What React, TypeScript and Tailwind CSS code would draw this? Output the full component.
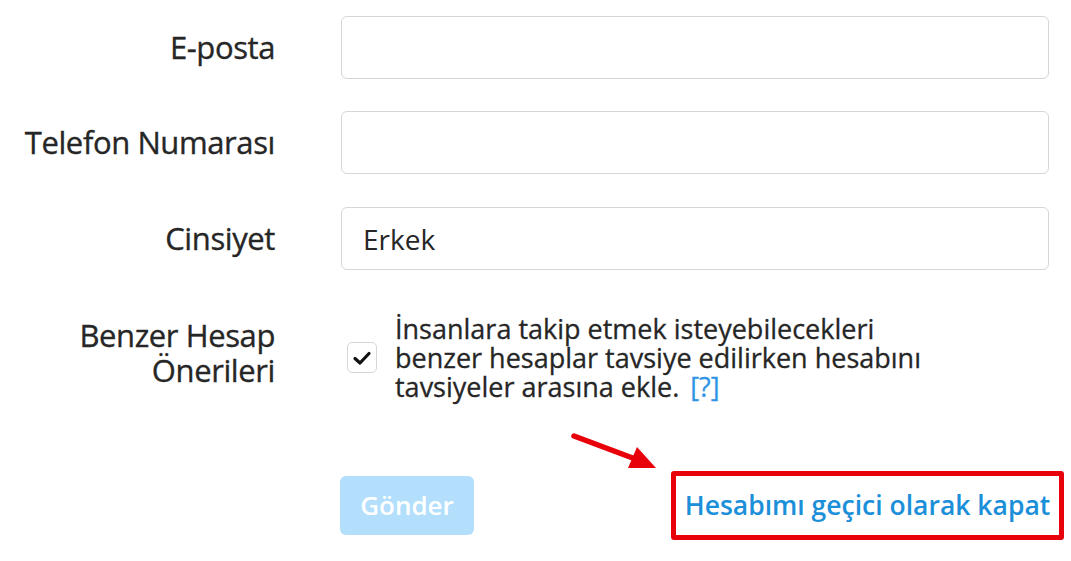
import React from "react";

const font = { fontFamily: '"Open Sans", "Noto Sans", sans-serif' };

function Label({ children }: { children: React.ReactNode }) {
  return (
    <div className="w-[275px] shrink-0 text-right text-[31px] font-normal leading-[35px] tracking-[-0.4px] text-[#262626] [-webkit-text-stroke:0.35px_#262626]">
      {children}
    </div>
  );
}

function Input({ value }: { value?: string }) {
  return (
    <div className="ml-[66px] flex h-[63px] w-[708px] items-center rounded-[6px] border border-[#d6d6d6] bg-white pl-[21px] text-[28px] text-[#262626]">
      {value}
    </div>
  );
}

export default function App() {
  return (
    <div
      className="relative h-[561px] w-[1071px] overflow-hidden bg-white pl-0 pt-[16px]"
      style={font}
    >
      <div className="flex items-center">
        <Label>E-posta</Label>
        <Input />
      </div>
      <div className="mt-[32px] flex items-center">
        <Label>Telefon Numarası</Label>
        <Input />
      </div>
      <div className="mt-[33px] flex items-center">
        <Label>Cinsiyet</Label>
        <Input value="Erkek" />
      </div>
      <div className="mt-[44px] flex items-start">
        <div className="pt-[4px]">
          <Label>
            Benzer Hesap
            <br />
            Önerileri
          </Label>
        </div>
        <div className="ml-[72px] flex items-center">
          <div className="flex h-[31px] w-[30px] shrink-0 items-center justify-center rounded-[5px] border border-[#d6d6d6] bg-white">
            <svg width="20" height="16" viewBox="0 0 20 16">
              <path
                d="M3 8.5 L8 13 L17 3.5"
                fill="none"
                stroke="#111"
                strokeWidth="3.2"
                strokeLinecap="round"
                strokeLinejoin="round"
              />
            </svg>
          </div>
          <div className="ml-[18px] text-[27px] font-normal leading-[29px] text-[#262626] [-webkit-text-stroke:0.3px_#262626]">
            İnsanlara takip etmek isteyebilecekleri
            <br />
            benzer hesaplar tavsiye edilirken hesabını
            <br />
            tavsiyeler arasına ekle.{" "}
            <span className="ml-[4px] font-normal text-[#2f95e4] [-webkit-text-stroke:0.3px_#2f95e4]">
              [?]
            </span>
          </div>
        </div>
      </div>
      <div className="mt-[70px] flex items-center">
        <div className="ml-[340px] flex h-[59px] w-[134px] items-center justify-center rounded-[6px] bg-[#b3dffc] text-[26px] font-semibold text-white">
          Gönder
        </div>
        <div className="ml-[197px] flex h-[69px] w-[393px] items-center justify-center rounded-[3px] border-[5px] border-[#e8000b]">
          <span className="text-[26.5px] font-semibold text-[#1c8fd9]">
            Hesabımı geçici olarak kapat
          </span>
        </div>
      </div>
      <svg
        className="absolute left-0 top-0"
        width="1071"
        height="561"
        viewBox="0 0 1071 561"
      >
        <line
          x1="574"
          y1="436"
          x2="638"
          y2="460"
          stroke="#e8000b"
          strokeWidth="5.5"
          strokeLinecap="round"
        />
        <polygon points="656,468 628,468 637,447" fill="#e8000b" />
      </svg>
    </div>
  );
}
